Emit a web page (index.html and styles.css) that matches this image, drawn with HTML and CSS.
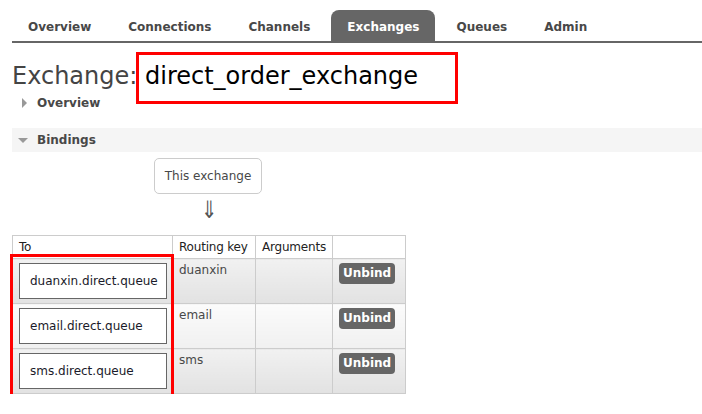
FILE: index.html
```html
<!DOCTYPE html>
<html>
<head>
<meta charset="utf-8">
<link rel="stylesheet" href="styles.css">
</head>
<body>
<div class="page">
  <ul class="tabs">
    <li class="tab">Overview</li>
    <li class="tab">Connections</li>
    <li class="tab">Channels</li>
    <li class="tab active">Exchanges</li>
    <li class="tab">Queues</li>
    <li class="tab">Admin</li>
  </ul>

  <h1 class="title"><span class="label">Exchange:</span> <span class="name">direct_order_exchange</span></h1>

  <div class="section closed"><span class="tri-right"></span>Overview</div>

  <div class="section open"><span class="tri-down"></span>Bindings</div>

  <div class="flow">
    <div class="source">This exchange</div>
    <div class="arrow">⇓</div>
  </div>

  <div class="bindings-wrap">
    <table class="bindings">
      <colgroup>
        <col class="c-to">
        <col class="c-key">
        <col class="c-args">
        <col class="c-act">
      </colgroup>
      <thead>
        <tr>
          <th>To</th>
          <th>Routing key</th>
          <th>Arguments</th>
          <th></th>
        </tr>
      </thead>
      <tbody>
        <tr class="alt1">
          <td><div class="queue">duanxin.direct.queue</div></td>
          <td>duanxin</td>
          <td></td>
          <td><span class="btn">Unbind</span></td>
        </tr>
        <tr class="alt0">
          <td><div class="queue">email.direct.queue</div></td>
          <td>email</td>
          <td></td>
          <td><span class="btn">Unbind</span></td>
        </tr>
        <tr class="alt1">
          <td><div class="queue">sms.direct.queue</div></td>
          <td>sms</td>
          <td></td>
          <td><span class="btn">Unbind</span></td>
        </tr>
      </tbody>
    </table>
    <div class="highlight hl-queues"></div>
  </div>
</div>
</body>
</html>
```

FILE: styles.css
```css
html, body {
  margin: 0;
  padding: 0;
  background: #fff;
}
body {
  font-family: "DejaVu Sans", Verdana, sans-serif;
  font-size: 12px;
  color: #484848;
}
.page {
  padding-left: 12px;
}
.tabs {
  list-style: none;
  margin: 0;
  padding: 10px 0 0 0;
  display: flex;
  border-bottom: 2px solid #666;
  height: 31px;
}
.tab {
  font-weight: bold;
  font-size: 12px;
  color: #484848;
  padding: 4px 16px 0 16px;
  margin-right: 5px;
  height: 27px;
  line-height: 27px;
  border-radius: 8px 8px 0 0;
}
.tab.active {
  background: #666;
  color: #fff;
}
.title {
  margin: 18px 0 0 0;
  font-weight: normal;
  font-size: 24px;
  line-height: 30px;
  position: relative;
}
.title .label {
  color: #444;
}
.title .name {
  color: #000;
  position: relative;
}
.title .name::before {
  content: "";
  position: absolute;
  left: -9px;
  top: -10px;
  width: 316px;
  height: 46px;
  border: 3px solid #f00;
}
.section {
  font-weight: bold;
  font-size: 12px;
  color: #484848;
  display: flex;
  align-items: center;
}
.section.closed {
  height: 20px;
  padding-left: 10px;
  margin-top: 2px;
}
.section.open {
  margin-top: 15px;
  height: 24px;
  background: #f5f5f5;
  padding-left: 6px;
}
.tri-right {
  width: 0;
  height: 0;
  border-top: 5px solid transparent;
  border-bottom: 5px solid transparent;
  border-left: 5px solid #999;
  margin-right: 10px;
}
.tri-down {
  width: 0;
  height: 0;
  border-left: 5px solid transparent;
  border-right: 5px solid transparent;
  border-top: 5px solid #999;
  margin-right: 9px;
}
.flow {
  width: 392px;
  display: flex;
  flex-direction: column;
  align-items: flex-start;
  padding-left: 142px;
  box-sizing: border-box;
}
.source {
  margin-top: 6px;
  border: 1px solid #ccc;
  border-radius: 5px;
  height: 34px;
  width: 106px;
  box-sizing: content-box;
  line-height: 34px;
  text-align: center;
  color: #484848;
}
.arrow {
  margin-left: 45px;
  font-size: 24px;
  line-height: 26px;
  height: 26px;
  margin-top: 3px;
  color: #555;
  transform: scaleX(0.8);
}
.bindings-wrap {
  position: relative;
  margin-top: 12px;
  width: 393px;
}
.bindings {
  border-collapse: collapse;
  table-layout: fixed;
  width: 393px;
  font-size: 12px;
  color: #484848;
  white-space: nowrap;
}
.bindings th, .bindings td {
  border: 1px solid #ccc;
  text-align: left;
  vertical-align: top;
  padding: 4px 6px 0 6px;
  font-weight: normal;
  overflow: visible;
}
.bindings th {
  height: 18px;
  padding-top: 4px;
  color: #222;
  background: #fff;
  letter-spacing: -0.2px;
}
.c-to { width: 160px; }
.c-key { width: 83px; }
.c-args { width: 77px; }
.c-act { width: 73px; }
.bindings td {
  height: 40px;
}
.alt1 td {
  background: linear-gradient(#f1f1f1, #e2e2e2);
}
.alt0 td {
  background: linear-gradient(#fbfbfb, #f0f0f0);
}
.queue {
  width: 136px;
  height: 34px;
  border: 1px solid #666;
  background: #fff;
  color: #1a1a2a;
  line-height: 34px;
  padding-left: 10px;
  font-size: 12px;
}
.btn {
  display: inline-block;
  background: #666;
  color: #fff;
  font-weight: bold;
  font-size: 12px;
  border-radius: 4px;
  padding: 0 4px;
  height: 21px;
  line-height: 21px;
}
.highlight {
  position: absolute;
  border: 3px solid #f00;
  pointer-events: none;
}
.hl-queues {
  left: -2px;
  top: 19px;
  width: 158px;
  height: 139px;
}
```
